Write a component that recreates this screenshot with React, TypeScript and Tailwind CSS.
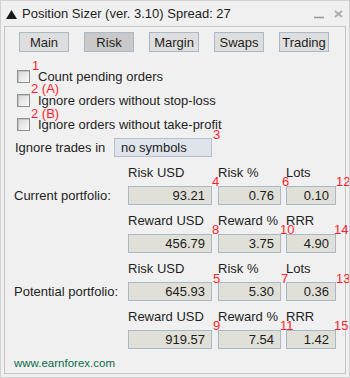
import React from 'react';

type Row = { label: string; value: string };

const fieldCls =
  'h-[19px] border border-[#a9b8c8] bg-[#e1e0d8] flex items-center justify-end pr-[6px] text-[#1c1c1c]';

function Tab({ label, active }: { label: string; active?: boolean }) {
  return (
    <button
      className={
        active
          ? 'w-[50px] h-[20px] border border-[#a9b8c8] bg-[#c9c9c9] text-[#1e1e1e] leading-[15px]'
          : 'w-[50px] h-[20px] border border-[#a9b8c8] bg-[#dedede] text-[#1e1e1e] leading-[15px]'
      }
    >
      {label}
    </button>
  );
}

function Check({ label }: { label: string }) {
  return (
    <div className="h-[24px] flex items-center pl-[12px] gap-[8px]">
      <div className="w-[13px] h-[13px] border border-[#8e8f8f] bg-gradient-to-br from-[#d6d6d6] to-[#fafafa] shadow-[inset_1px_1px_0_#c4c4c4]" />
      <span>{label}</span>
    </div>
  );
}

function LabelRow({ items }: { items: string[] }) {
  return (
    <div className="h-[29px] flex items-end pb-[6px] pl-[123px]">
      <span className="w-[90px]">{items[0]}</span>
      <span className="w-[68px]">{items[1]}</span>
      <span className="w-[50px]">{items[2]}</span>
    </div>
  );
}

function FieldRow({ title, values }: { title?: string; values: string[] }) {
  return (
    <div className="h-[19px] flex items-center pl-[9px]">
      <span className="w-[114px]">{title}</span>
      <div className={`${fieldCls} w-[84px]`}>{values[0]}</div>
      <div className={`${fieldCls} w-[63px] ml-[6px]`}>{values[1]}</div>
      <div className={`${fieldCls} w-[50px] ml-[5px]`}>{values[2]}</div>
    </div>
  );
}

function Portfolio({ title, risk, reward }: { title: string; risk: string[]; reward: string[] }) {
  return (
    <div>
      <LabelRow items={['Risk USD', 'Risk %', 'Lots']} />
      <FieldRow title={title} values={risk} />
      <LabelRow items={['Reward USD', 'Reward %', 'RRR']} />
      <FieldRow values={reward} />
    </div>
  );
}

export default function App() {
  return (
    <div className="relative w-[350px] h-[378px] overflow-hidden border border-[#d2d2d2] bg-[#f0f0f0] font-['Liberation_Sans',Arial,sans-serif] text-[13px] leading-[15px] text-[#1e1e1e]">
      {/* title bar */}
      <div className="h-[25px] flex items-center pl-[5px] pr-[6px]">
        <svg width="11" height="9" viewBox="0 0 11 9" className="mt-[1px]">
          <polygon points="5.5,0 11,9 0,9" fill="#1a1a1a" />
        </svg>
        <span className="ml-[5px]">Position Sizer (ver. 3.10) Spread: 27</span>
        <div className="ml-auto flex items-center gap-[10px]">
          <svg width="10" height="9" viewBox="0 0 10 9" className="mt-[2px]">
            <line x1="0" y1="7.5" x2="10" y2="7.5" stroke="#9c9c9c" strokeWidth="1.6" />
          </svg>
          <svg width="9" height="8" viewBox="0 0 9 8">
            <line x1="1" y1="1" x2="8" y2="7" stroke="#ababab" strokeWidth="2" />
            <line x1="8" y1="1" x2="1" y2="7" stroke="#ababab" strokeWidth="2" />
          </svg>
        </div>
      </div>

      {/* panel */}
      <div className="ml-[3px] w-[342px] h-[348px] border border-[#c6c6c6] bg-[#f0f0f0]">
        <div className="mt-[5px] flex pl-[14px] gap-[15px]">
          <Tab label="Main" />
          <Tab label="Risk" active />
          <Tab label="Margin" />
          <Tab label="Swaps" />
          <Tab label="Trading" />
        </div>

        <div className="mt-[12px]">
          <Check label="Count pending orders" />
          <Check label="Ignore orders without stop-loss" />
          <Check label="Ignore orders without take-profit" />
        </div>

        <div className="mt-[2px] h-[19px] flex items-center pl-[10px]">
          <span className="w-[99px]">Ignore trades in</span>
          <div className="w-[98px] h-[19px] border border-[#b3bfcd] bg-[#dfe3ea] flex items-center pl-[6px]">
            no symbols
          </div>
        </div>

        <Portfolio title="Current portfolio:" risk={['93.21', '0.76', '0.10']} reward={['456.79', '3.75', '4.90']} />
        <Portfolio title="Potential portfolio:" risk={['645.93', '5.30', '0.36']} reward={['919.57', '7.54', '1.42']} />

        <div className="mt-[7px] pl-[9px] text-[11.5px] leading-[14px] text-[#0d6b4c]">www.earnforex.com</div>
      </div>

      {/* red annotations */}
      <span className="absolute left-[31px] top-[57px] text-[#ff1e2d]">1</span>
      <span className="absolute left-[30px] top-[80px] text-[#ff1e2d]">2 (A)</span>
      <span className="absolute left-[30px] top-[105px] text-[#ff1e2d]">2 (B)</span>
      <span className="absolute left-[212px] top-[126px] text-[#ff1e2d]">3</span>
      <span className="absolute left-[211px] top-[173px] text-[#ff1e2d]">4</span>
      <span className="absolute left-[281px] top-[173px] text-[#ff1e2d]">6</span>
      <span className="absolute left-[335px] top-[173px] text-[#ff1e2d]">12</span>
      <span className="absolute left-[211px] top-[221px] text-[#ff1e2d]">8</span>
      <span className="absolute left-[279px] top-[221px] text-[#ff1e2d]">10</span>
      <span className="absolute left-[333px] top-[221px] text-[#ff1e2d]">14</span>
      <span className="absolute left-[212px] top-[270px] text-[#ff1e2d]">5</span>
      <span className="absolute left-[280px] top-[270px] text-[#ff1e2d]">7</span>
      <span className="absolute left-[335px] top-[270px] text-[#ff1e2d]">13</span>
      <span className="absolute left-[212px] top-[317px] text-[#ff1e2d]">9</span>
      <span className="absolute left-[279px] top-[317px] text-[#ff1e2d]">11</span>
      <span className="absolute left-[333px] top-[317px] text-[#ff1e2d]">15</span>
    </div>
  );
}
